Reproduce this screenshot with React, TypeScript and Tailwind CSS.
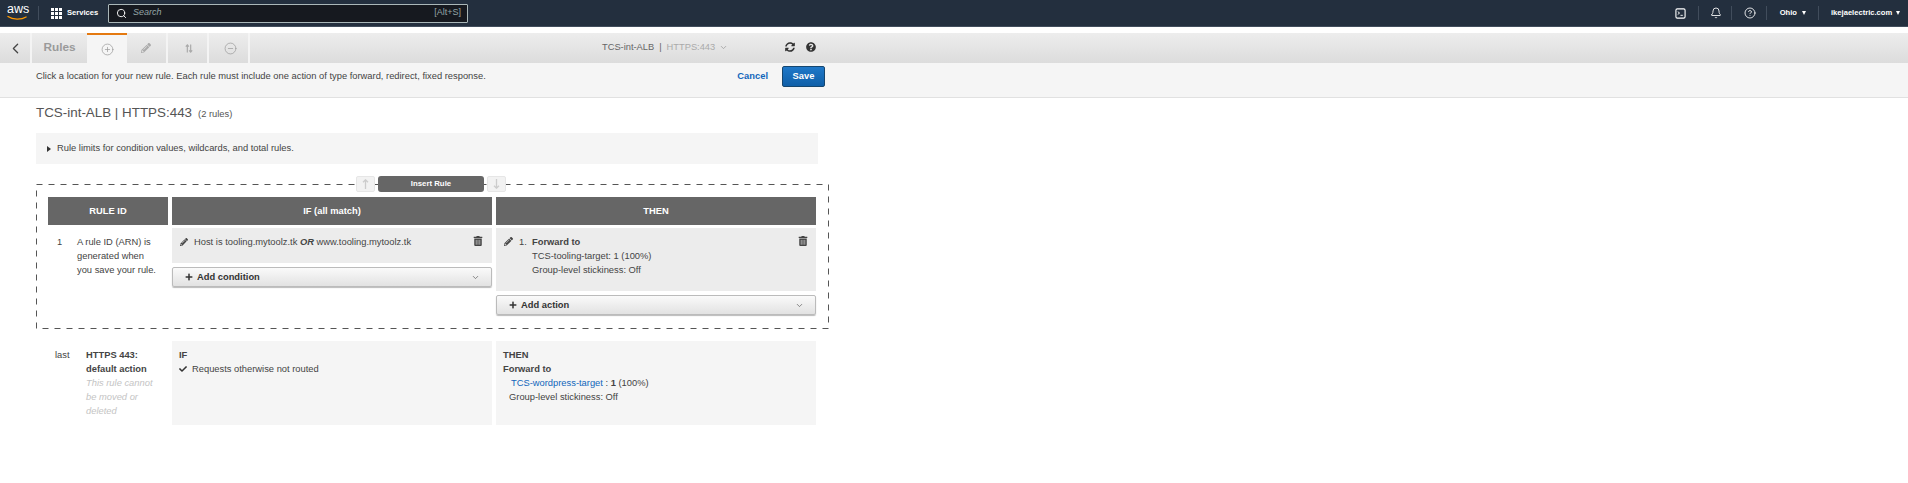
import {
  Bell,
  ChevronDown,
  ChevronLeft,
  CircleHelp,
  CircleMinus,
  CirclePlus,
  Search,
} from "lucide-react";
import {
  FaCheck,
  FaPencilAlt,
  FaPlus,
  FaQuestionCircle,
  FaSyncAlt,
  FaTrashAlt,
} from "react-icons/fa";

function Divider() {
  return <div className="h-[14px] w-px shrink-0 bg-[#414d5c]" />;
}

function Caret() {
  return (
    <span className="block h-0 w-0 shrink-0 border-x-[2.5px] border-t-[4px] border-x-transparent border-t-white" />
  );
}

function TopNav() {
  return (
    <nav className="flex h-[27px] items-center border-b border-[#414d5c] bg-[#232f3e] text-white">
      <div className="relative ml-[7px] h-[20px] w-[21px] shrink-0">
        <span className="block text-center text-[12.5px] leading-[13px]">aws</span>
        <svg
          viewBox="0 0 22 6"
          className="absolute top-[12px] left-0 h-[6px] w-[21px]"
          fill="none"
        >
          <path
            d="M1 1.5C6 5 15 5 20 2"
            stroke="#f90"
            strokeWidth="1.4"
            strokeLinecap="round"
          />
        </svg>
      </div>
      <div className="mr-[12px] ml-[10px]">
        <Divider />
      </div>
      <svg viewBox="0 0 11 11" className="h-[11px] w-[11px] shrink-0" fill="#fff">
        <rect x="0" y="0" width="3" height="3" />
        <rect x="4" y="0" width="3" height="3" />
        <rect x="8" y="0" width="3" height="3" />
        <rect x="0" y="4" width="3" height="3" />
        <rect x="4" y="4" width="3" height="3" />
        <rect x="8" y="4" width="3" height="3" />
        <rect x="0" y="8" width="3" height="3" />
        <rect x="4" y="8" width="3" height="3" />
        <rect x="8" y="8" width="3" height="3" />
      </svg>
      <span className="ml-[5px] w-[41px] text-[7.6px] font-bold">Services</span>
      <div className="flex h-[19px] w-[360px] items-center rounded-[1px] border border-[#aab7b8] bg-[#16191f] pr-[6px] pl-[7px]">
        <Search size={11} strokeWidth={2} className="text-white" />
        <span className="ml-[6px] text-[9px] text-[#95a5a6] italic">Search</span>
        <span className="ml-auto text-[9px] text-[#95a5a6]">[Alt+S]</span>
      </div>
      <div className="ml-auto flex items-center text-[7.6px] font-bold">
        <svg viewBox="0 0 12 12" className="mr-[12px] h-[11px] w-[11px]" fill="none" stroke="#fff">
          <rect x="1" y="1" width="10" height="10" rx="1.5" strokeWidth="1.2" />
          <path d="M3 4l2 1.5L3 7M6 8h2.5" strokeWidth="1" />
        </svg>
        <Divider />
        <Bell size={12} strokeWidth={1.7} className="mr-[9px] ml-[11px]" />
        <Divider />
        <CircleHelp size={12} strokeWidth={1.7} className="mr-[10px] ml-[12px]" />
        <Divider />
        <span className="mr-[5px] ml-[13px]">Ohio</span>
        <Caret />
        <div className="mx-[12px]">
          <Divider />
        </div>
        <span className="mr-[5px] w-[60px] whitespace-nowrap">ikejaelectric.com</span>
        <div className="mr-[8px]">
          <Caret />
        </div>
      </div>
    </nav>
  );
}

function ToolTab({ children, active }: { children: React.ReactNode; active?: boolean }) {
  return (
    <div
      className={`flex items-center justify-center ${
        active
          ? "mr-[3px] ml-[2px] w-[40px] border-t-2 border-[#e47911] bg-[#f5f5f5]"
          : "mr-[3px] w-[38px] border-r-2 border-[#f4f4f4]"
      }`}
    >
      {children}
    </div>
  );
}

function Toolbar() {
  return (
    <div className="mt-[6px] flex h-[30px] bg-gradient-to-b from-[#ededed] to-[#dcdcdc]">
      <div className="flex w-[602px] shrink-0">
        <div className="flex w-[32px] items-center justify-center border-r-2 border-[#f4f4f4]">
          <ChevronLeft size={17} strokeWidth={1.8} className="text-[#444]" />
        </div>
        <div className="ml-[2px] flex w-[51px] items-center justify-center text-[11.8px] font-bold text-[#9a9a9a]">
          Rules
        </div>
        <ToolTab active>
          <CirclePlus size={13} strokeWidth={1.3} className="text-[#999]" />
        </ToolTab>
        <ToolTab>
          <FaPencilAlt size={10} className="mr-[5px] text-[#aaa]" />
        </ToolTab>
        <ToolTab>
          <svg viewBox="0 0 12 14" className="h-[13px] w-[8px]" fill="none" stroke="#aaa" strokeWidth="1.8">
            <path d="M3.5 13V2M1.2 4.2l2.3-2.5 2.3 2.5M8.5 1v11M6.2 9.8l2.3 2.5 2.3-2.5" />
          </svg>
        </ToolTab>
        <ToolTab>
          <CircleMinus size={13} strokeWidth={1.3} className="text-[#999]" />
        </ToolTab>
      </div>
      <div className="flex w-[183px] items-center pb-[1px] text-[9.3px] text-[#666]">
        <span className="whitespace-nowrap">TCS-int-ALB</span>
        <span className="mx-[5px]">|</span>
        <span className="whitespace-nowrap text-[#aaa]">HTTPS:443</span>
        <ChevronDown size={9} strokeWidth={2} className="ml-[4px] shrink-0 text-[#999]" />
      </div>
      <div className="flex items-center gap-[11px] pb-[3px] text-[#333]">
        <FaSyncAlt size={10} />
        <FaQuestionCircle size={10} />
      </div>
    </div>
  );
}

function SaveStrip() {
  return (
    <div className="flex h-[35px] border-b border-[#e1e1e1] bg-[#f5f5f5] pt-[3px] pl-[36px] text-[9.35px] text-[#444]">
      <div className="flex h-[21px] w-[789px] items-center">
        <span>
          Click a location for your new rule. Each rule must include one action of type forward,
          redirect, fixed response.
        </span>
        <span className="ml-auto font-bold text-[#1166bb]">Cancel</span>
        <button className="ml-[14px] h-[21px] w-[43px] rounded-[2px] border border-[#15466f] bg-gradient-to-b from-[#1f78c8] to-[#0f5fa8] font-bold text-white">
          Save
        </button>
      </div>
    </div>
  );
}

function AddButton({ label }: { label: string }) {
  return (
    <div className="flex h-[20px] items-center rounded-[2px] border border-[#bbb] bg-gradient-to-b from-[#fafafa] to-[#e2e2e2] pr-[11px] pl-[12px] shadow-[0_1px_1px_#bbb]">
      <FaPlus size={8} className="text-[#333]" />
      <span className="ml-[4px] text-[9.35px] font-bold text-[#333]">{label}</span>
      <ChevronDown size={9} strokeWidth={2} className="ml-auto text-[#666]" />
    </div>
  );
}

function ColumnHead({ width, children }: { width: string; children: React.ReactNode }) {
  return (
    <div className={`flex h-[28px] items-center justify-center bg-[#666] text-[9.35px] font-bold text-white ${width}`}>
      {children}
    </div>
  );
}

function ArrowBox({ down }: { down?: boolean }) {
  return (
    <div className="flex h-[16px] w-[19px] items-center justify-center rounded-[2px] border border-[#e6e6e6] bg-[#f2f2f2]">
      <svg viewBox="0 0 8 12" className="h-[10px] w-[7px]" fill="none" stroke="#ccc" strokeWidth="1.6">
        {down ? <path d="M4 0v11M1 8l3 3 3-3" /> : <path d="M4 12V1M1 4l3-3 3 3" />}
      </svg>
    </div>
  );
}

function RuleBox() {
  return (
    <div className="relative mt-[20px] ml-[36px] h-[145px] w-[793px] pt-[13px] pl-[12px]">
      <svg className="absolute top-0 left-0 h-[145px] w-[793px]" fill="none">
        <rect x="0.5" y="0.5" width="792" height="144" stroke="#555" strokeDasharray="6 6" />
      </svg>
      <div className="absolute -top-[8px] left-[320px] flex items-center gap-[3px]">
        <ArrowBox />
        <div className="flex h-[16px] w-[106px] items-center justify-center rounded-[3px] bg-[#666] text-[7.8px] font-bold text-white">
          Insert Rule
        </div>
        <ArrowBox down />
      </div>
      <div className="relative flex gap-[4px]">
        <ColumnHead width="w-[120px]">RULE ID</ColumnHead>
        <ColumnHead width="w-[320px]">IF (all match)</ColumnHead>
        <ColumnHead width="w-[320px]">THEN</ColumnHead>
      </div>
      <div className="relative mt-[3px] flex gap-[4px] text-[9.35px] leading-[14px] text-[#444]">
        <div className="flex w-[120px] pt-[7px]">
          <span className="w-[29px] pl-[9px]">1</span>
          <span className="w-[82px]">A rule ID (ARN) is generated when you save your rule.</span>
        </div>
        <div className="w-[320px]">
          <div className="flex h-[35px] items-start bg-[#ececec] pt-[7px] pr-[9px] pl-[8px]">
            <FaPencilAlt size={8} className="mt-[3px] text-[#444]" />
            <span className="ml-[6px]">
              Host is tooling.mytoolz.tk <b className="italic">OR</b> www.tooling.mytoolz.tk
            </span>
            <FaTrashAlt size={10} className="mt-[1px] ml-auto text-[#444]" />
          </div>
          <div className="mt-[4px]">
            <AddButton label="Add condition" />
          </div>
        </div>
        <div className="w-[320px]">
          <div className="flex h-[63px] items-start bg-[#ececec] pt-[7px] pr-[8px] pl-[8px]">
            <FaPencilAlt size={9} className="mt-[2px] shrink-0 text-[#444]" />
            <span className="ml-[6px] w-[13px] shrink-0">1.</span>
            <div>
              <div className="font-bold">Forward to</div>
              <div>TCS-tooling-target: 1 (100%)</div>
              <div>Group-level stickiness: Off</div>
            </div>
            <FaTrashAlt size={10} className="mt-[1px] ml-auto text-[#444]" />
          </div>
          <div className="mt-[4px]">
            <AddButton label="Add action" />
          </div>
        </div>
      </div>
    </div>
  );
}

function DefaultRule() {
  return (
    <div className="mt-[12px] ml-[48px] flex gap-[4px] text-[9.35px] leading-[14px] text-[#444]">
      <div className="flex w-[120px] pt-[7px]">
        <span className="w-[38px] pl-[7px]">last</span>
        <div className="w-[72px]">
          <div className="font-bold">HTTPS 443: default action</div>
          <div className="text-[#c4c4c4] italic">This rule cannot be moved or deleted</div>
        </div>
      </div>
      <div className="h-[84px] w-[320px] bg-[#f5f5f5] pt-[7px] pl-[7px]">
        <div className="font-bold">IF</div>
        <div className="flex items-center">
          <FaCheck size={8} className="mr-[5px] text-[#333]" />
          Requests otherwise not routed
        </div>
      </div>
      <div className="h-[84px] w-[320px] bg-[#f5f5f5] pt-[7px] pl-[7px]">
        <div className="font-bold">THEN</div>
        <div className="font-bold">Forward to</div>
        <div className="pl-[8px]">
          <span className="text-[#1166bb]">TCS-wordpress-target</span> : <b>1</b> (100%)
        </div>
        <div className="pl-[6px]">Group-level stickiness: Off</div>
      </div>
    </div>
  );
}

export default function App() {
  return (
    <div className="h-[483px] w-[1908px] overflow-hidden bg-white font-['Liberation_Sans',Arial,sans-serif]">
      <TopNav />
      <Toolbar />
      <SaveStrip />
      <h1 className="mt-[5px] ml-[36px] text-[13.4px] leading-[20px] text-[#555]">
        TCS-int-ALB | HTTPS:443
        <span className="ml-[6px] text-[9.35px]">(2 rules)</span>
      </h1>
      <div className="mt-[9px] ml-[36px] flex h-[31px] w-[782px] items-center bg-[#f5f5f5] pl-[11px] text-[9.35px] text-[#444]">
        <span className="h-0 w-0 border-y-[3.5px] border-l-[4px] border-y-transparent border-l-[#333]" />
        <span className="ml-[6px]">Rule limits for condition values, wildcards, and total rules.</span>
      </div>
      <RuleBox />
      <DefaultRule />
    </div>
  );
}
